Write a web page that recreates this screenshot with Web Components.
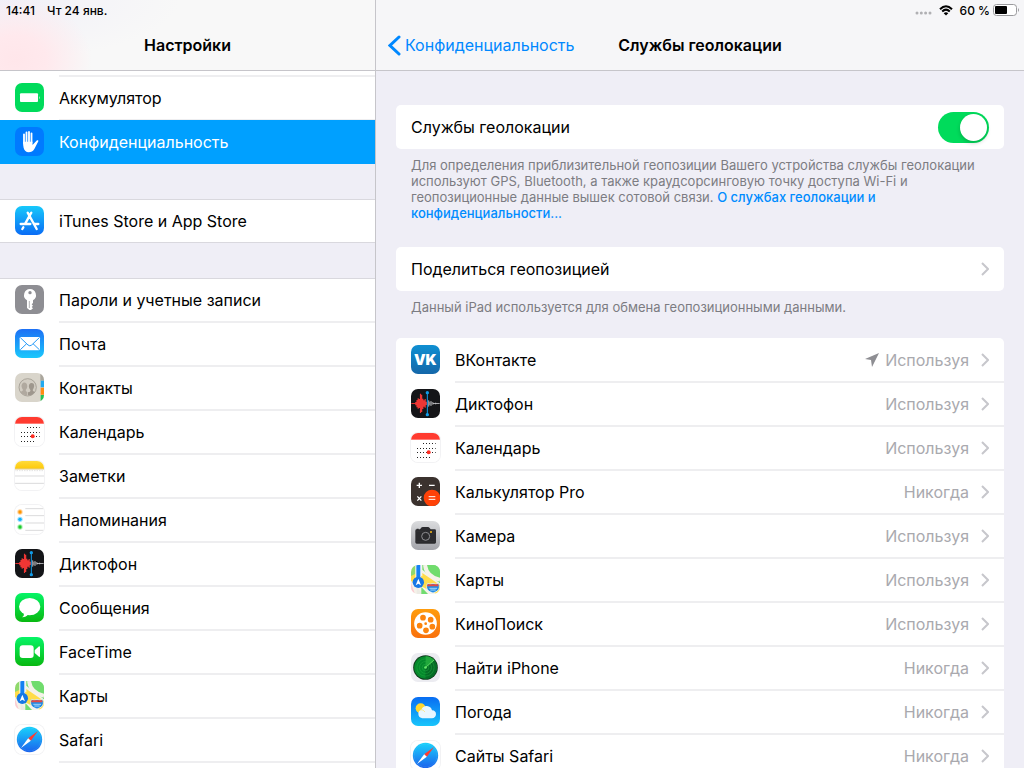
<!DOCTYPE html>
<html lang="ru">
<head>
<meta charset="utf-8">
<meta name="viewport" content="width=device-width, initial-scale=1">
<title>Настройки</title>
<style>
    body {
        margin: 0;
        font-family: Inter, "Liberation Sans", sans-serif;
        font-size: 16px;
        color: #000;
        background: #efeef6;
    }
</style>
</head>
<body>
<settings-app></settings-app>

<script>
const dots = (y, x1, x2) => `<path d="M${x1} ${y}H${x2}" stroke="#222" stroke-width="3" stroke-dasharray="3 6"/>`;

// every icon is drawn on an 87x87 grid
const icons = {
    battery: `
        <rect width="87" height="87" fill="#00db5b"/>
        <rect x="15" y="31" width="54" height="26" rx="3" fill="#fff"/>
        <path d="M72 39q4 5 0 10z" fill="#fff"/>`,
    hand: `
        <rect width="87" height="87" fill="#007aff"/>
        <g stroke="#fff" stroke-width="5.500" stroke-linecap="round" fill="none">
            <path d="M27 48V22M34.500 46V16M42 46V15M49.500 46V19"/>
        </g>
        <path d="M24 44H52.500V54L66 40Q71 38 70 43L58 66Q52 76 41 76Q29 75 26 63Q24 54 24 44Z" fill="#fff"/>`,
    store: `
        <defs><linearGradient id="g" x2="0" y2="1"><stop stop-color="#17c9fb"/><stop offset="1" stop-color="#0a6cf5"/></linearGradient></defs>
        <rect width="87" height="87" fill="url(#g)"/>
        <g stroke="#fff" stroke-width="7" stroke-linecap="round" fill="none">
            <path d="M49 20L31 52M38 20L65 69M17 54H46M59 54H70M25 64L22 69"/>
        </g>`,
    key: `
        <rect width="87" height="87" fill="#8e8e93"/>
        <path d="M45 12a18 18 0 0 0-9 33.500V69l7 6h5l6-5-4-4 4-4-4-4 4-4V45.500A18 18 0 0 0 45 12z" fill="#fff"/>
        <circle cx="45" cy="23" r="5" fill="#8e8e93"/>
        <path d="M43 48V69" stroke="#8e8e93" stroke-width="2"/>`,
    mail: `
        <defs><linearGradient id="g" x2="0" y2="1"><stop stop-color="#1d70f5"/><stop offset="1" stop-color="#1ac8fc"/></linearGradient></defs>
        <rect width="87" height="87" fill="url(#g)"/>
        <rect x="14" y="24" width="61" height="40" rx="4" fill="#fff"/>
        <path d="M16 26L39 48Q44.500 53 50 48L73 26M16 62L35 44M73 62L54 44" fill="none" stroke="#2499f8" stroke-width="3"/>`,
    contacts: `
        <rect width="87" height="87" fill="#d9d5cb"/>
        <path d="M76 0H87V23H76z" fill="#aaa69d"/>
        <path d="M77 23H87V43H77z" fill="#22aaf0"/>
        <path d="M77 44H87V65H77z" fill="#ff8c13"/>
        <path d="M77 66H87V87H77z" fill="#22c553"/>
        <circle cx="38" cy="43" r="26" fill="#d2cdc3" stroke="#a09a90" stroke-width="2.500"/>
        <g fill="#9e978d">
            <path d="M39 62V58Q48 56 46 51Q39 43 43 34Q48 27 56 32Q60 40 53 51Q52 54 60 58Q52 68 39 67z"/>
            <path d="M37 67Q23 67 16 57Q24 54 24 51Q17 41 21 33Q27 25 35 32Q40 42 32 51Q32 55 37 58z" fill="#b0a99f"/>
        </g>`,
    calendar: `
        <rect width="87" height="87" fill="#fff"/>
        <rect width="87" height="20" fill="#ff3b30"/>
        ${dots(31.5, 36, 74)}${dots(46.5, 18, 74)}${dots(58.5, 18, 74)}${dots(73.5, 18, 58)}
        <circle cx="53" cy="58" r="6" fill="#ff2d22"/>`,
    notes: `
        <defs><linearGradient id="g" x2="0" y2="1"><stop stop-color="#ffdb3a"/><stop offset="1" stop-color="#fdc90a"/></linearGradient></defs>
        <rect width="87" height="87" fill="#fff"/>
        <rect width="87" height="23" fill="url(#g)"/>
        <path d="M0 24H87" stroke="#d2ad3d" stroke-width="2"/>
        <path d="M2 29H87" stroke="#bbb" stroke-width="2" stroke-dasharray="2 3"/>
        <path d="M0 45H87M0 67H87" stroke="#d2d2d4" stroke-width="2.500"/>`,
    reminders: `
        <rect width="87" height="87" fill="#fff"/>
        <path d="M31 11H87M31 32H87M31 54H87M31 76H87" stroke="#d2d2d4" stroke-width="2.500"/>
        <circle cx="15" cy="21" r="8" fill="#ffcf95"/><circle cx="15" cy="21" r="5" fill="#ff9500"/>
        <circle cx="15" cy="43" r="8" fill="#9be0ff"/><circle cx="15" cy="43" r="5" fill="#10b0fb"/>
        <circle cx="15" cy="66" r="8" fill="#a8efaf"/><circle cx="15" cy="66" r="5" fill="#1dc92d"/>`,
    memos: `
        <rect width="87" height="87" fill="#141518"/>
        <path d="M1 43.500H18" stroke="#e0302f" stroke-width="3"/>
        <g stroke="#ef3634" stroke-width="3.500" fill="none">
            <path d="M14.500 39V49M18 33V55M21.500 28V59M25 30V57M28.500 14V72M32 17V69M35.500 29V60M39 34V53M42.500 30V56M46 38V48"/>
        </g>
        <g stroke="#c4c4c8" stroke-width="2.500" fill="none">
            <path d="M53 34V53M56.500 38V49M60 36V51M63.500 39V47M67 41V46M66 43.500H86M74 41V46"/>
        </g>
        <path d="M49 11V78" stroke="#119ce8" stroke-width="3"/>
        <circle cx="49" cy="11" r="5" fill="#119ce8"/><circle cx="49" cy="77" r="5" fill="#119ce8"/>`,
    messages: `
        <defs><linearGradient id="g" x2="0" y2="1"><stop stop-color="#06f567"/><stop offset="1" stop-color="#09b811"/></linearGradient></defs>
        <rect width="87" height="87" fill="url(#g)"/>
        <ellipse cx="44" cy="41" rx="32" ry="26" fill="#fff"/>
        <path d="M27 60Q28 69 21 73Q34 73 40 64z" fill="#fff"/>`,
    facetime: `
        <defs><linearGradient id="g" x2="0" y2="1"><stop stop-color="#06f567"/><stop offset="1" stop-color="#09b811"/></linearGradient></defs>
        <rect width="87" height="87" fill="url(#g)"/>
        <rect x="14" y="25" width="42" height="38" rx="9" fill="#fff"/>
        <path d="M59 40L72 28Q75 27 75 31V57Q75 61 72 59L59 48z" fill="#fff"/>`,
    maps: `
        <rect width="87" height="87" fill="#f5f2e9"/>
        <path d="M34 0H87V55L34 14z" fill="#70dc6d"/>
        <path d="M42 0Q47 37 87 44" fill="none" stroke="#f5f2e9" stroke-width="12"/>
        <path d="M60 0Q64 20 87 24V0z" fill="#70dc6d"/>
        <path d="M0 0H14V33L0 42z" fill="#8fd96c"/>
        <path d="M0 33L14 26L34 34V24L87 60V87H76L0 48z" fill="#ffdc4a"/>
        <path d="M0 54L12 87H0z" fill="#fbcbd2"/>
        <path d="M17 65L34 87H17z" fill="#ecebe5"/>
        <path d="M31 66L51 87H31z" fill="#71dc70"/>
        <path d="M22 0V48" stroke="#fff" stroke-width="17"/>
        <path d="M22 0V48" stroke="#1681f2" stroke-width="12"/>
        <circle cx="22" cy="52" r="17" fill="#1778e5"/>
        <path d="M22 41L30 61L22 56L14 61z" fill="#fff"/>
        <path d="M50 55Q57 60 66 55Q75 60 82 55Q90 69 78 79L66 84L54 79Q42 69 50 55z" fill="#268ce2" stroke="#fff" stroke-width="2"/>
        <path d="M50 58H82V64H48z" fill="#e74842"/>
        <path d="M55 70H78M58 75H74" stroke="#bfe2fb" stroke-width="2.500"/>`,
    safari: `
        <defs><linearGradient id="g" x2="0" y2="1"><stop stop-color="#19d2fc"/><stop offset="1" stop-color="#1b62ed"/></linearGradient></defs>
        <rect width="87" height="87" fill="#fff"/>
        <circle cx="43.500" cy="43.500" r="38" fill="url(#g)"/>
        <circle cx="43.500" cy="43.500" r="34" fill="none" stroke="#8ddbfc" stroke-width="3" stroke-dasharray="1 3" opacity=".5"/>
        <path d="M69 18L39.500 39.500L47.500 47.500z" fill="#ff3b30"/>
        <path d="M18 69L39.500 39.500L47.500 47.500z" fill="#fff"/>`,
    vk: `
        <defs><linearGradient id="g" x2="0" y2="1"><stop stop-color="#0f8fd2"/><stop offset="1" stop-color="#1467a9"/></linearGradient></defs>
        <rect width="87" height="87" fill="url(#g)"/>
        <text x="43" y="61" text-anchor="middle" font-family="Inter, sans-serif" font-weight="900" font-size="44" fill="#fff">VK</text>`,
    calculator: `
        <rect width="87" height="87" fill="#3b322e"/>
        <g stroke="#fff" stroke-width="4" fill="none">
            <path d="M17 25H33M25 17V33M54 25H71M19 58L31 71M31 58L19 71"/>
        </g>
        <circle cx="63" cy="63" r="25" fill="#ff4208"/>
        <path d="M53 59H73M53 67H73" stroke="#fff" stroke-width="3"/>`,
    camera: `
        <defs><linearGradient id="g" x2="0" y2="1"><stop stop-color="#dbdcde"/><stop offset="1" stop-color="#a3a4aa"/></linearGradient></defs>
        <rect width="87" height="87" fill="url(#g)"/>
        <path d="M13 29Q13 25 17 25V23H23V25H27L32 19Q33 18 36 18H51Q54 18 56 21L59 25H71Q75 25 75 29V64Q75 68 71 68H17Q13 68 13 64z" fill="#2b2b2e"/>
        <path d="M13 32H75M13 62H75" stroke="#3c3d41" stroke-width="1"/>
        <circle cx="44" cy="46" r="16" fill="#2b2b2e"/>
        <circle cx="44" cy="46" r="12" fill="none" stroke="#8d8d91" stroke-width="3"/>
        <circle cx="60" cy="33" r="3" fill="#f9ba19"/>`,
    kino: `
        <defs><linearGradient id="g" x2="0" y2="1"><stop stop-color="#ff9d0d"/><stop offset="1" stop-color="#f9700c"/></linearGradient></defs>
        <rect width="87" height="87" fill="url(#g)"/>
        <circle cx="43.500" cy="43.500" r="34" fill="#fff"/>
        <g fill="#fc840d">
            <circle cx="36" cy="26" r="8.500"/><circle cx="59" cy="32" r="8.500"/>
            <circle cx="26" cy="50" r="8.500"/><circle cx="45" cy="64" r="8.500"/>
            <circle cx="64" cy="53" r="8.500"/><circle cx="44" cy="44" r="4"/>
        </g>`,
    find: `
        <rect width="87" height="87" fill="#ececf1"/>
        <circle cx="43.500" cy="43.500" r="37" fill="#10381c"/>
        <circle cx="43.500" cy="43.500" r="34" fill="#06892d"/>
        <path d="M43.500 43.500L70 22A34 34 0 0 1 43.500 77.500z" fill="#056d25"/>
        <path d="M43.500 43.500L44 9.500A34 34 0 0 1 70 22z" fill="#22a93c"/>
        <g fill="none" stroke="#24ae43" stroke-width="2" opacity=".7">
            <circle cx="43.500" cy="43.500" r="10"/><circle cx="43.500" cy="43.500" r="18"/><circle cx="43.500" cy="43.500" r="26"/>
        </g>
        <path d="M43.500 43.500L69 21" stroke="#7dee76" stroke-width="2"/>
        <circle cx="43.500" cy="43.500" r="4" fill="#65e669"/>`,
    weather: `
        <defs><linearGradient id="g" x2="0" y2="1"><stop stop-color="#086cf2"/><stop offset="1" stop-color="#18c5fb"/></linearGradient></defs>
        <rect width="87" height="87" fill="url(#g)"/>
        <circle cx="29" cy="34" r="15" fill="#ffd72f"/>
        <path d="M32 63A13 13 0 0 1 31 38Q36 26 48 27Q60 28 63 40Q75 41 75 52Q74 63 63 64H33z" fill="#e8f6ff"/>
        <path d="M29 38Q37 37 42 45" fill="none" stroke="#fbe793" stroke-width="3"/>`
};

const whiteIcons = ['calendar', 'notes', 'reminders', 'safari'];

class AppIcon extends HTMLElement {
    connectedCallback() {
        let name = this.getAttribute('name');
        let shadowRoot = this.attachShadow({ mode: 'open' });
        shadowRoot.innerHTML = `
        <style>
            :host {
                display: block;
                flex: none;
                width: 29px;
                height: 29px;
                border-radius: 7px;
                overflow: hidden;
                box-shadow: ${whiteIcons.includes(name) ? '0 0 0 1px #f2f2f4' : 'none'};
            }
            svg { display: block; }
        </style>
        <svg width="29" height="29" viewBox="0 0 87 87" aria-hidden="true">${icons[name]}</svg>
        `;
    }
}

// One line of a list: icon, title, and on the right an optional value with a chevron
class SettingsRow extends HTMLElement {
    connectedCallback() {
        let icon = this.getAttribute('icon');
        let value = this.getAttribute('value');
        let shadowRoot = this.attachShadow({ mode: 'open' });
        shadowRoot.innerHTML = `
        <style>
            :host { display: block; }
            a {
                display: flex;
                height: 44px;
                padding-left: 15px;
                align-items: center;
                gap: 15px;
                color: inherit;
                text-decoration: none;
            }
            app-icon { margin-top: -1px; }
            .body {
                box-sizing: border-box;
                flex: 1;
                align-self: stretch;
                display: flex;
                align-items: center;
                padding-right: 15px;
                border-top: 1px solid #eeeef0;
                border-bottom: 1px solid #eeeef0;
            }
            :host(:first-child) .body, :host([active]) .body { border-top-color: transparent; }
            :host(:last-child) .body, :host([active]) .body { border-bottom-color: transparent; }
            :host([active]) { background: #00a0ff; color: #fff; }
            .title { flex: 1; white-space: nowrap; }
            .value { color: #a9a9ae; margin-right: 12px; }
            .arrow { margin-right: 6px; }
            svg { display: block; flex: none; }
        </style>
        <a href="#" ${this.hasAttribute('active') ? 'aria-current="page"' : ''}>
            ${icon ? `<app-icon name="${icon}"></app-icon>` : ''}
            <span class="body">
                <span class="title"><slot></slot></span>
                ${this.hasAttribute('located') ? `
                <svg class="arrow" width="14" height="14" viewBox="0 0 14 14"><path d="M14 0L7 14L6 7L0 6z" fill="#8e8e93"/></svg>` : ''}
                ${value ? `<span class="value">${value}</span>` : ''}
                ${this.hasAttribute('more') ? `
                <svg width="8" height="14" viewBox="0 0 8 14"><path d="M1 1L7 7L1 13" fill="none" stroke="#c7c7cc" stroke-width="2"/></svg>` : ''}
            </span>
        </a>
        `;
    }
}

class SettingsGroup extends HTMLElement {
    connectedCallback() {
        let shadowRoot = this.attachShadow({ mode: 'open' });
        shadowRoot.innerHTML = `
        <style>
            :host {
                display: flex;
                flex-direction: column;
                flex: none;
                background: #fff;
                box-shadow: inset 0 1px #d9d8de, inset 0 -1px #d9d8de;
            }
            :host([top]) { box-shadow: none; }
            :host([fill]) { flex: 1 0 auto; box-shadow: inset 0 1px #d9d8de; }
            :host([card]) { box-shadow: none; border-radius: 5px; }
        </style>
        <slot></slot>
        `;
    }
}

class ToggleRow extends HTMLElement {
    connectedCallback() {
        let shadowRoot = this.attachShadow({ mode: 'open' });
        shadowRoot.innerHTML = `
        <style>
            :host { display: block; }
            label {
                display: flex;
                align-items: center;
                justify-content: space-between;
                height: 44px;
                padding: 0 15px;
            }
            input {
                appearance: none;
                box-sizing: border-box;
                display: flex;
                width: 51px;
                height: 31px;
                margin: 0;
                padding: 2px;
                border-radius: 16px;
                background: #e5e5ea;
            }
            input::before {
                content: "";
                width: 27px;
                height: 27px;
                border-radius: 50%;
                background: #fff;
                box-shadow: 0 2px 4px rgba(0, 0, 0, .2);
            }
            input:checked { background: #00db5b; justify-content: flex-end; }
        </style>
        <label><span><slot></slot></span><input type="checkbox" role="switch" ${this.hasAttribute('checked') ? 'checked' : ''}></label>
        `;
    }
}

class GroupNote extends HTMLElement {
    connectedCallback() {
        let shadowRoot = this.attachShadow({ mode: 'open' });
        shadowRoot.innerHTML = `
        <style>
            :host {
                display: block;
                padding: 8px 15px 0;
                font-size: 13px;
                line-height: 16px;
                color: #7c7c82;
            }
            ::slotted(a) { color: #008cff; font-weight: 500; text-decoration: none; }
        </style>
        <slot></slot>
        `;
    }
}

class PaneHeader extends HTMLElement {
    connectedCallback() {
        let shadowRoot = this.attachShadow({ mode: 'open' });
        shadowRoot.innerHTML = `
        <style>
            :host {
                display: block;
                flex: none;
                background: #f6f6f8;
                border-bottom: 1px solid #c6c5ca;
            }
            :host([tinted]) {
                background:
                    radial-gradient(ellipse 76px 62px at 16px 60px, #ffe6ea, #ffe9ed 40%, rgba(255, 233, 237, 0)),
                    radial-gradient(ellipse 180px 60px at 0 0, #f1f0f8, rgba(241, 240, 248, 0)),
                    #f8f8f8;
            }
            .status {
                display: flex;
                align-items: center;
                height: 20px;
                padding: 0 5px 0 6px;
                font-size: 12px;
                font-weight: 500;
            }
            .bar {
                display: grid;
                grid-template-columns: 1fr auto 1fr;
                align-items: center;
                height: 50px;
                padding: 0 12px;
            }
            h1 { grid-column: 2; grid-row: 1; margin: 0; font-size: 16px; font-weight: 600; }
            ::slotted([slot=back]) { grid-column: 1; grid-row: 1; }
        </style>
        <div class="status"><slot name="status"></slot></div>
        <div class="bar">
            <slot name="back"></slot>
            <h1><slot></slot></h1>
        </div>
        `;
    }
}

class BackLink extends HTMLElement {
    connectedCallback() {
        let shadowRoot = this.attachShadow({ mode: 'open' });
        shadowRoot.innerHTML = `
        <style>
            :host { display: block; }
            a { display: flex; align-items: center; gap: 4px; color: #0088ff; text-decoration: none; }
            svg { flex: none; }
        </style>
        <a href="#">
            <svg width="13" height="21" viewBox="0 0 13 21"><path d="M11 2L2 10.500L11 19" fill="none" stroke="#08f" stroke-width="3" stroke-linecap="round"/></svg>
            <span><slot></slot></span>
        </a>
        `;
    }
}

class DeviceStatus extends HTMLElement {
    connectedCallback() {
        let shadowRoot = this.attachShadow({ mode: 'open' });
        shadowRoot.innerHTML = `
        <style>
            :host { display: flex; align-items: center; margin-left: auto; }
            .signal { margin-right: 7px; margin-top: 6px; }
            .wifi { margin-right: 7px; }
            .battery { margin-left: 3px; }
        </style>
        <svg class="signal" width="17" height="4" viewBox="0 0 17 4" fill="#b0b0b3">
            <circle cx="2" cy="2" r="1.500"/><circle cx="6.300" cy="2" r="1.500"/><circle cx="10.600" cy="2" r="1.500"/><circle cx="15" cy="2" r="1.500"/>
        </svg>
        <svg class="wifi" width="14" height="11" viewBox="0 0 14 11">
            <g fill="none" stroke="#000" stroke-width="2">
                <path d="M1 4.200Q7-1.800 13 4.200M3.200 6.500Q7 2.800 10.800 6.500"/>
            </g>
            <path d="M7 10.500L4.700 8.200Q7 6.200 9.300 8.200z"/>
        </svg>
        <span><slot></slot></span>
        <svg class="battery" width="26" height="12" viewBox="0 0 26 12">
            <rect x=".5" y=".5" width="23" height="11" rx="3" fill="#fff" stroke="#9a9a9d"/>
            <rect x="2" y="2" width="12" height="8" rx="1"/>
            <path d="M25 4q2 2 0 4z" fill="#9a9a9d"/>
        </svg>
        `;
    }
}

class SettingsApp extends HTMLElement {
    connectedCallback() {
        let shadowRoot = this.attachShadow({ mode: 'open' });
        shadowRoot.innerHTML = `
        <style>
            :host {
                display: grid;
                grid-template-columns: 376px 1fr;
                height: 100vh;
            }
            nav, main {
                display: flex;
                flex-direction: column;
                min-width: 0;
                min-height: 0;
            }
            nav { border-right: 1px solid #c6c5ca; }
            .list, .content {
                display: flex;
                flex-direction: column;
                flex: 1;
                min-height: 0;
                overflow-y: auto;
                scrollbar-width: none;
            }
            .list { gap: 35px; }
            .content { padding: 34px 20px 0; }
            .date { margin-left: 12px; }
            .peek {
                box-sizing: border-box;
                flex: none;
                height: 5px;
                margin-left: 59px;
                border-bottom: 1px solid #eeeef0;
            }
            .peek.end { border-bottom: 0; border-top: 1px solid #eeeef0; }
            .share { margin-top: 26px; }
            .apps { margin-top: 23px; }
        </style>
        <nav>
            <pane-header tinted>
                <span slot="status">14:41</span>
                <span slot="status" class="date">Чт 24 янв.</span>
                Настройки
            </pane-header>
            <div class="list">
                <settings-group top>
                    <div class="peek"></div>
                    <settings-row icon="battery">Аккумулятор</settings-row>
                    <settings-row icon="hand" active>Конфиденциальность</settings-row>
                </settings-group>
                <settings-group>
                    <settings-row icon="store">iTunes Store и App Store</settings-row>
                </settings-group>
                <settings-group fill>
                    <settings-row icon="key">Пароли и учетные записи</settings-row>
                    <settings-row icon="mail">Почта</settings-row>
                    <settings-row icon="contacts">Контакты</settings-row>
                    <settings-row icon="calendar">Календарь</settings-row>
                    <settings-row icon="notes">Заметки</settings-row>
                    <settings-row icon="reminders">Напоминания</settings-row>
                    <settings-row icon="memos">Диктофон</settings-row>
                    <settings-row icon="messages">Сообщения</settings-row>
                    <settings-row icon="facetime">FaceTime</settings-row>
                    <settings-row icon="maps">Карты</settings-row>
                    <settings-row icon="safari">Safari</settings-row>
                    <div class="peek end"></div>
                </settings-group>
            </div>
        </nav>
        <main>
            <pane-header>
                <device-status slot="status">60 %</device-status>
                <back-link slot="back">Конфиденциальность</back-link>
                Службы геолокации
            </pane-header>
            <div class="content">
                <settings-group card>
                    <toggle-row checked>Службы геолокации</toggle-row>
                </settings-group>
                <group-note>Для определения приблизительной геопозиции Вашего устройства службы геолокации используют GPS, Bluetooth, а также краудсорсинговую точку доступа Wi-Fi и геопозиционные данные вышек сотовой связи. <a href="#">О службах геолокации и конфиденциальности...</a></group-note>
                <settings-group card class="share">
                    <settings-row more>Поделиться геопозицией</settings-row>
                </settings-group>
                <group-note>Данный iPad используется для обмена геопозиционными данными.</group-note>
                <settings-group card class="apps">
                    <settings-row icon="vk" value="Используя" located more>ВКонтакте</settings-row>
                    <settings-row icon="memos" value="Используя" more>Диктофон</settings-row>
                    <settings-row icon="calendar" value="Используя" more>Календарь</settings-row>
                    <settings-row icon="calculator" value="Никогда" more>Калькулятор Pro</settings-row>
                    <settings-row icon="camera" value="Используя" more>Камера</settings-row>
                    <settings-row icon="maps" value="Используя" more>Карты</settings-row>
                    <settings-row icon="kino" value="Используя" more>КиноПоиск</settings-row>
                    <settings-row icon="find" value="Никогда" more>Найти iPhone</settings-row>
                    <settings-row icon="weather" value="Никогда" more>Погода</settings-row>
                    <settings-row icon="safari" value="Никогда" more>Сайты Safari</settings-row>
                </settings-group>
            </div>
        </main>
        `;
    }
}

window.customElements.define('app-icon', AppIcon);
window.customElements.define('settings-row', SettingsRow);
window.customElements.define('settings-group', SettingsGroup);
window.customElements.define('toggle-row', ToggleRow);
window.customElements.define('group-note', GroupNote);
window.customElements.define('pane-header', PaneHeader);
window.customElements.define('back-link', BackLink);
window.customElements.define('device-status', DeviceStatus);
window.customElements.define('settings-app', SettingsApp);
</script>
</body>
</html>
